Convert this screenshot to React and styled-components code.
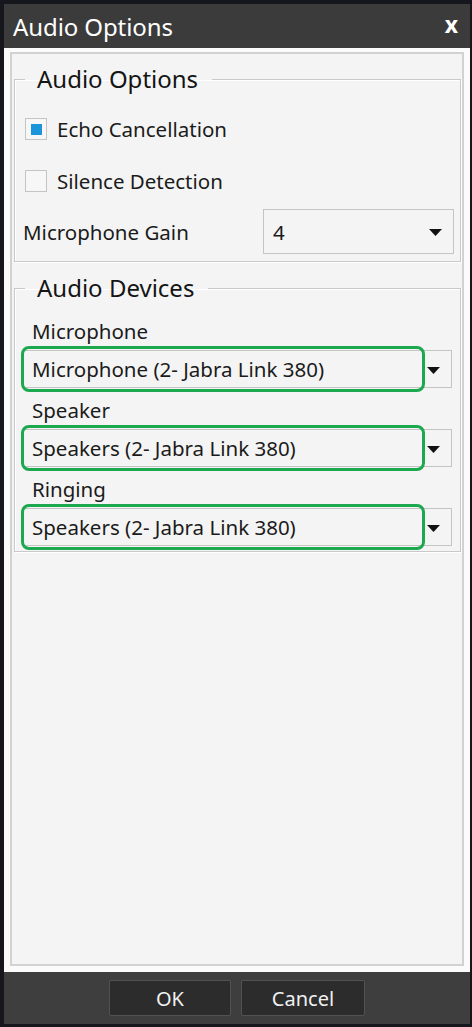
import React from "react";
import styled, { createGlobalStyle } from "styled-components";

const GlobalStyle = createGlobalStyle`
  html, body {
    margin: 0;
    padding: 0;
    background: #16161d;
  }
  body {
    font-family: "Noto Sans", "Open Sans", Arial, sans-serif;
  }
`;

function Caret() {
  return (
    <svg width="13" height="7" viewBox="0 0 13 7">
      <path d="M0 0 L13 0 L6.5 7 Z" fill="#111" />
    </svg>
  );
}

function Dropdown({ value, highlight, wide }) {
  return (
    <SelectBox wide={wide}>
      <SelectText>{value}</SelectText>
      <ArrowSlot>
        <Caret />
      </ArrowSlot>
      {highlight && <Highlight />}
    </SelectBox>
  );
}

function Checkbox({ checked, label }) {
  return (
    <CheckRow>
      <CheckSquare>{checked && <CheckFill />}</CheckSquare>
      <span>{label}</span>
    </CheckRow>
  );
}

export default function App() {
  const devices = [
    { label: "Microphone", value: "Microphone (2- Jabra Link 380)" },
    { label: "Speaker", value: "Speakers (2- Jabra Link 380)" },
    { label: "Ringing", value: "Speakers (2- Jabra Link 380)" },
  ];

  return (
    <>
      <GlobalStyle />
      <Window>
        <TitleBar>
          <Title>Audio Options</Title>
          <Close>x</Close>
        </TitleBar>
        <Frame>
          <Panel>
            <Group>
              <Legend>Audio Options</Legend>
              <Checkbox checked label="Echo Cancellation" />
              <Checkbox label="Silence Detection" />
              <GainRow>
                <span>Microphone Gain</span>
                <Dropdown value="4" />
              </GainRow>
            </Group>
            <Group devices>
              <Legend>Audio Devices</Legend>
              {devices.map((d) => (
                <DeviceBlock key={d.label}>
                  <DeviceLabel>{d.label}</DeviceLabel>
                  <Dropdown value={d.value} highlight wide />
                </DeviceBlock>
              ))}
            </Group>
          </Panel>
        </Frame>
        <Footer>
          <Button>OK</Button>
          <Button wide>Cancel</Button>
        </Footer>
      </Window>
    </>
  );
}

const Window = styled.div`
  display: flex;
  flex-direction: column;
  height: 1020px;
  margin: 4px 2px 3px 4px;
`;

const TitleBar = styled.div`
  display: flex;
  align-items: center;
  justify-content: space-between;
  height: 44px;
  padding: 0 12px 0 9px;
  background: #3b3b3b;
  color: #fff;
`;

const Title = styled.div`
  font-size: 24px;
  letter-spacing: -0.1px;
`;

const Close = styled.div`
  font-size: 23px;
  font-weight: 700;
  padding-bottom: 4px;
`;

const Frame = styled.div`
  flex: 1;
  display: flex;
  background: #fbfbfb;
  padding: 4px 6px 6px 6px;
`;

const Panel = styled.div`
  flex: 1;
  background: #f4f4f4;
  border: 2px solid #d2d2d2;
  padding: 9px 1px 0 2px;
  color: #1b1b1b;
  font-size: 20.5px;
`;

const Group = styled.fieldset`
  margin: 0 0 ${(p) => (p.devices ? "0" : "10px")} 0;
  padding: ${(p) => (p.devices ? "8px 8px 5px 7px" : "21px 6px 7px 7px")};
  border: 1px solid #c9c9c9;
  box-shadow: inset 1px 1px 0 #fff, 1px 1px 0 #fff;
  display: flex;
  flex-direction: column;
  min-width: 0;
`;

const Legend = styled.legend`
  margin-left: 3px;
  padding: 0 14px 0 12px;
  font-size: 24px;
  line-height: 32px;
  color: #151515;
`;

const CheckRow = styled.div`
  display: flex;
  align-items: center;
  gap: 10px;
  height: 26px;
  margin-bottom: 26px;
  margin-left: 3px;
`;

const CheckSquare = styled.div`
  width: 20px;
  height: 20px;
  border: 1px solid #c4c4c4;
  background: #f7f7f7;
  display: flex;
  align-items: center;
  justify-content: center;
`;

const CheckFill = styled.div`
  width: 11px;
  height: 11px;
  background: #1c94d9;
`;

const GainRow = styled.div`
  display: flex;
  align-items: center;
  justify-content: space-between;
  margin-top: -11px;
  margin-left: 1px;
`;

const SelectBox = styled.div`
  position: relative;
  display: flex;
  align-items: center;
  width: ${(p) => (p.wide ? "100%" : "191px")};
  height: ${(p) => (p.wide ? "38px" : "45px")};
  box-sizing: border-box;
  border: 1px solid #c4c4c4;
  background: #f4f4f4;
  padding-left: 9px;
`;

const SelectText = styled.span`
  flex: 1;
  white-space: nowrap;
`;

const ArrowSlot = styled.div`
  width: 36px;
  display: flex;
  justify-content: center;
  padding-top: 2px;
`;

const Highlight = styled.div`
  position: absolute;
  top: -5px;
  bottom: -5px;
  left: -2px;
  right: 26px;
  border: 3px solid #1ba84f;
  border-radius: 8px;
`;

const DeviceBlock = styled.div`
  display: flex;
  flex-direction: column;
  margin-bottom: 3px;

  &:last-of-type {
    margin-bottom: 0;
  }
`;

const DeviceLabel = styled.div`
  height: 38px;
  display: flex;
  align-items: center;
  padding-left: 10px;
`;

const Footer = styled.div`
  height: 52px;
  background: #3e3e3e;
  display: flex;
  justify-content: center;
  align-items: center;
  gap: 10px;
`;

const Button = styled.div`
  width: ${(p) => (p.wide ? "124px" : "122px")};
  height: 36px;
  box-sizing: border-box;
  background: #2c2c2c;
  border: 1px solid #525252;
  border-radius: 2px;
  color: #f0f0f0;
  font-size: 20px;
  display: flex;
  align-items: center;
  justify-content: center;
`;
